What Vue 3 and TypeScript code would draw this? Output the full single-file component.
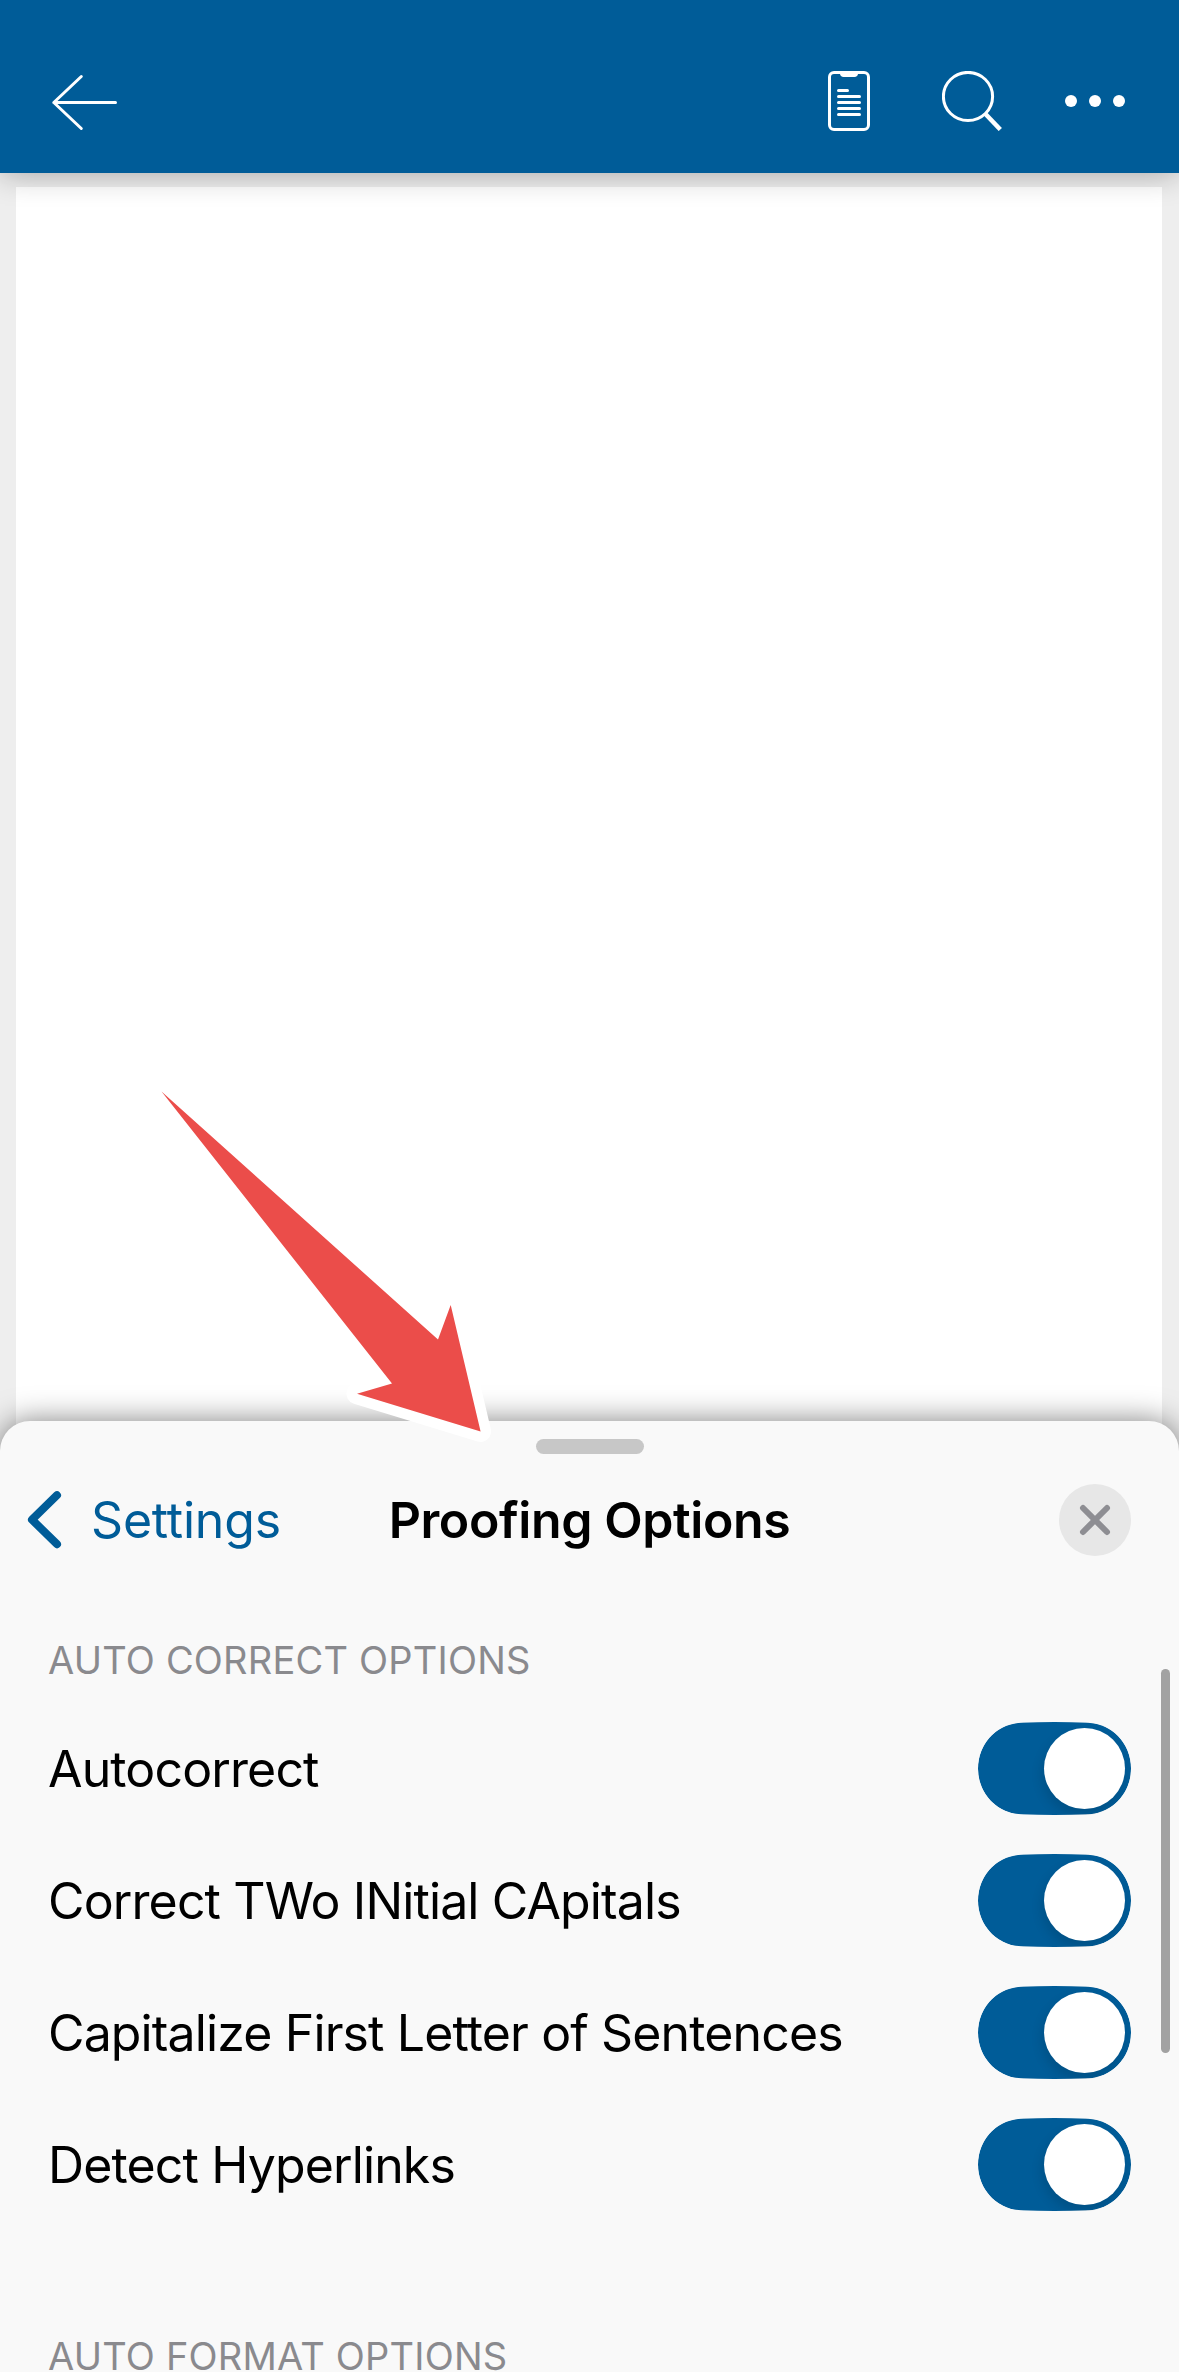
<script setup lang="ts">
import { reactive } from 'vue'

interface Option {
  id: string
  label: string
  on: boolean
}

const options = reactive<Option[]>([
  { id: 'autocorrect', label: 'Autocorrect', on: true },
  { id: 'capitals', label: 'Correct TWo INitial CApitals', on: true },
  { id: 'sentences', label: 'Capitalize First Letter of Sentences', on: true },
  { id: 'links', label: 'Detect Hyperlinks', on: true },
])
</script>

<template>
  <div class="screen">
    <header class="bar">
      <svg class="back" width="70" height="60" viewBox="0 0 70 60">
        <path d="M33.3 5.5 5.8 31.5l27.5 26M5.8 31.5h61.7" />
      </svg>
      <div class="tools">
        <svg width="42" height="60" viewBox="0 0 42 60">
          <rect x="1.5" y="1.5" width="39" height="57" rx="4.5" />
          <path class="solid" d="M12 1h18v1.500c0 2-1.500 3.500-3.500 3.500h-11c-2 0-3.500-1.500-3.500-3.500z" />
          <path d="M10.500 19.500h9M10.500 25.500h21M10.500 31.500h21M10.500 37.500h21M10.500 43.500h21" />
        </svg>
        <svg width="60" height="60" viewBox="0 0 60 60">
          <ellipse cx="26" cy="25.500" rx="24.600" ry="24.100" />
          <path class="handle" d="M43 42.500 58.300 58.500" />
        </svg>
        <svg width="60" height="60" viewBox="0 0 60 60">
          <g class="solid">
            <circle cx="6" cy="30" r="6" />
            <circle cx="30" cy="30" r="6" />
            <circle cx="54" cy="30" r="6" />
          </g>
        </svg>
      </div>
    </header>

    <main class="canvas">
      <div class="page"></div>
    </main>

    <section class="sheet">
      <div class="grip"></div>
      <div class="nav">
        <a class="link">
          <svg width="35" height="60" viewBox="0 0 35 60">
            <path d="M30 5.200 5 29.700l25 24.500" />
          </svg>
          <span>Settings</span>
        </a>
        <h1>Proofing Options</h1>
        <button class="close" aria-label="Close">
          <svg width="72" height="72" viewBox="0 0 72 72">
            <path d="M24 24l24 24M48 24 24 48" />
          </svg>
        </button>
      </div>
      <h2>AUTO CORRECT OPTIONS</h2>
      <ul>
        <li v-for="o in options" :key="o.id" @click="o.on = !o.on">
          <span class="label">{{ o.label }}</span>
          <span class="toggle" :class="{ off: !o.on }">
            <svg width="153" height="93" viewBox="0 0 153 93">
              <path
                d="M0 46.500C0 21 19 1.800 43 .7Q60 0 76.500 0T110 .7C134 1.800 153 21 153 46.500S134 91.200 110 92.300Q93 93 76.500 93T43 92.300C19 91.200 0 72 0 46.500z"
              />
            </svg>
            <i></i>
          </span>
        </li>
      </ul>
      <h2 class="format">AUTO FORMAT OPTIONS</h2>
      <div class="scrollbar"></div>
    </section>

    <svg class="pointer" width="360" height="370" viewBox="150 1080 360 370">
      <path d="M161.500 1091.500 438 1339.500l12.700-34.500 29.900 126.500L357 1393.700l35-10.200z" />
    </svg>
  </div>
</template>

<style>
body {
  margin: 0;
}
</style>

<style scoped>
.screen {
  position: relative;
  display: flex;
  flex-direction: column;
  width: 1179px;
  height: 2372px;
  overflow: hidden;
  background: #eee;
  font-family: Inter, 'Liberation Sans', sans-serif;
  font-size: 50px;
  color: #000;
}
.bar {
  position: relative;
  z-index: 1;
  flex: none;
  display: flex;
  justify-content: space-between;
  box-sizing: border-box;
  height: 173px;
  padding: 71px 54px 0 48px;
  background: #005c98;
  box-shadow: 0 0 30px rgba(0, 0, 0, 0.32);
}
.bar svg {
  display: block;
  fill: none;
  stroke: #fff;
  stroke-width: 3;
  stroke-linecap: round;
  stroke-linejoin: round;
}
.bar .solid {
  fill: #fff;
  stroke: none;
}
.bar .handle {
  stroke-width: 4.5;
  stroke-linecap: butt;
}
.tools {
  display: flex;
  gap: 63px;
}
.tools svg:first-child {
  margin-right: 9px;
}
.canvas {
  flex: none;
  display: flex;
  box-sizing: border-box;
  height: 1283px;
  margin-bottom: -35px;
  padding: 14px 17px 0 16px;
}
.page {
  flex: 1;
  background: #fff;
}
.sheet {
  position: relative;
  flex: none;
  box-sizing: border-box;
  height: 951px;
  padding-top: 18px;
  border-radius: 30px 30px 0 0;
  background: #f9f9f9;
  box-shadow: 0 0 30px rgba(0, 0, 0, 0.5);
}
.grip {
  width: 108px;
  height: 15px;
  margin: 0 auto;
  border-radius: 8px;
  background: #c7c7c7;
}
.nav {
  display: grid;
  grid-template-columns: 362px 1fr 362px;
  align-items: center;
  height: 132px;
}
.link {
  display: flex;
  align-items: center;
  margin-left: 27px;
  letter-spacing: -0.2px;
  color: #005c98;
}
.link svg {
  margin-right: 29px;
  fill: none;
  stroke: #005c98;
  stroke-width: 8;
  stroke-linecap: round;
  stroke-linejoin: round;
}
h1 {
  margin: 0;
  font-size: 50px;
  font-weight: 600;
  letter-spacing: -0.4px;
  text-align: center;
  white-space: nowrap;
}
.close {
  justify-self: end;
  width: 72px;
  height: 72px;
  margin-right: 48px;
  padding: 0;
  border: 0;
  border-radius: 50%;
  background: #e7e7e7;
}
.close svg {
  display: block;
  stroke: #8e8e93;
  stroke-width: 6;
  stroke-linecap: round;
}
h2 {
  margin: 49px 48px 0;
  font-size: 38px;
  font-weight: 400;
  line-height: 50px;
  letter-spacing: 0.2px;
  color: #8a8a8e;
  white-space: nowrap;
}
ul {
  margin: 17px 0 0;
  padding: 0;
  list-style: none;
}
li {
  display: flex;
  align-items: center;
  justify-content: space-between;
  height: 132px;
  padding: 0 48px;
  white-space: nowrap;
}
.label {
  padding-top: 2px;
  letter-spacing: -0.87px;
}
.toggle {
  display: grid;
  border-radius: 46px;
  overflow: hidden;
}
.toggle svg,
.toggle i {
  grid-area: 1 / 1;
  display: block;
}
.toggle svg {
  fill: #005c98;
}
.toggle i {
  width: 81px;
  height: 81px;
  margin: 6px;
  justify-self: end;
  border-radius: 50%;
  background: #fff;
  box-shadow: -2px 6px 12px rgba(0, 0, 0, 0.13);
}
.toggle.off i {
  justify-self: start;
}
h2.format {
  margin-top: 101px;
}
.scrollbar {
  position: absolute;
  top: 248px;
  right: 9px;
  width: 9px;
  height: 384px;
  border-radius: 5px;
  background: #a2a2a2;
}
.pointer {
  position: absolute;
  left: 150px;
  top: 1080px;
}
.pointer path {
  fill: #eb4d4a;
  stroke: #fff;
  stroke-width: 21;
  stroke-linejoin: round;
  paint-order: stroke;
}
</style>
